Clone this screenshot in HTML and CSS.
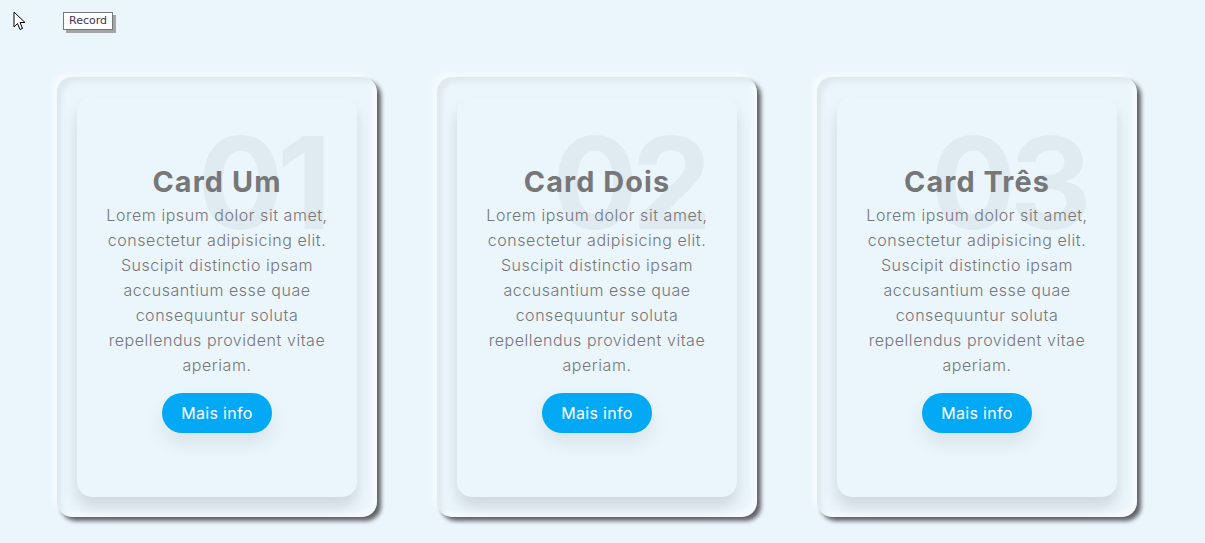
FILE: index.html
```html
<!DOCTYPE html>
<html lang="pt">
<head>
<meta charset="utf-8">
<title>Cards</title>
<link rel="stylesheet" href="styles.css">
</head>
<body>
<svg class="cursor" width="14" height="20" viewBox="0 0 14 20" aria-hidden="true">
  <path d="M1 1 L1 16 L4.5 12.5 L7 18.5 L9.5 17.5 L7 11.5 L12 11.5 Z" fill="#fff" stroke="#000" stroke-width="1" stroke-linejoin="miter"/>
</svg>
<div class="record">Record</div>

<div class="container">
  <div class="card">
    <div class="box">
      <span class="num">01</span>
      <div class="content">
        <h3>Card Um</h3>
        <p>Lorem ipsum dolor sit amet, consectetur adipisicing elit. Suscipit distinctio ipsam accusantium esse quae consequuntur soluta repellendus provident vitae aperiam.</p>
        <a href="#">Mais info</a>
      </div>
    </div>
  </div>
  <div class="card">
    <div class="box">
      <span class="num">02</span>
      <div class="content">
        <h3>Card Dois</h3>
        <p>Lorem ipsum dolor sit amet, consectetur adipisicing elit. Suscipit distinctio ipsam accusantium esse quae consequuntur soluta repellendus provident vitae aperiam.</p>
        <a href="#">Mais info</a>
      </div>
    </div>
  </div>
  <div class="card">
    <div class="box">
      <span class="num">03</span>
      <div class="content">
        <h3>Card Três</h3>
        <p>Lorem ipsum dolor sit amet, consectetur adipisicing elit. Suscipit distinctio ipsam accusantium esse quae consequuntur soluta repellendus provident vitae aperiam.</p>
        <a href="#">Mais info</a>
      </div>
    </div>
  </div>
</div>
</body>
</html>
```
FILE: styles.css
```css
* { box-sizing: border-box; }
html, body { margin: 0; padding: 0; }
body {
  background: #ebf5fc;
  font-family: Inter, "Open Sans", sans-serif;
  min-height: 543px;
  position: relative;
  overflow: hidden;
}
.cursor {
  position: absolute;
  left: 13px;
  top: 11px;
}
.record {
  position: absolute;
  left: 63px;
  top: 12px;
  width: 50px;
  height: 18px;
  border: 1px solid #767676;
  background: #fff;
  box-shadow: 3px 3px 0 #a3a6a9;
  font-family: "DejaVu Sans", sans-serif;
  font-size: 11px;
  line-height: 16px;
  text-align: center;
  color: #3a3550;
}
.container {
  display: flex;
  gap: 60px;
  padding: 77px 0 0 57px;
}
.card {
  width: 320px;
  height: 440px;
  flex: none;
  border-radius: 15px;
  padding: 20px;
  display: flex;
  box-shadow:
    inset 5px 5px 5px rgba(0, 0, 0, 0.05),
    inset -5px -5px 5px rgba(255, 255, 255, 0.5),
    4px 4px 4px rgba(0, 0, 0, 0.6),
    -5px -5px 5px rgba(255, 255, 255, 0.5);
}
.box {
  flex: 1;
  position: relative;
  background: #ebf5fc;
  border-radius: 15px;
  box-shadow: 0 10px 15px rgba(0, 0, 0, 0.12);
  display: flex;
  justify-content: center;
  align-items: center;
  overflow: hidden;
}
.num {
  position: absolute;
  top: -10px;
  right: 32px;
  font-size: 128px;
  font-weight: 700;
  line-height: 1.5;
  color: rgba(0, 0, 0, 0.045);
  letter-spacing: -7px;
}
.content {
  position: relative;
  padding: 20px;
  text-align: center;
}
.content h3 {
  margin: 0;
  font-size: 28.8px;
  line-height: 42px;
  font-weight: 700;
  color: #777;
  letter-spacing: 1.1px;
}
.content p {
  margin: 0;
  font-size: 16px;
  line-height: 25px;
  font-weight: 300;
  color: #777;
  letter-spacing: 0.55px;
}
.content a {
  display: inline-block;
  margin-top: 15px;
  padding: 8px 19px;
  background: #03a9f4;
  border-radius: 20px;
  color: #fff;
  text-decoration: none;
  font-size: 16px;
  line-height: 24px;
  font-weight: 400;
  letter-spacing: 0.3px;
  box-shadow: 0 10px 20px rgba(0, 0, 0, 0.08);
}
```
